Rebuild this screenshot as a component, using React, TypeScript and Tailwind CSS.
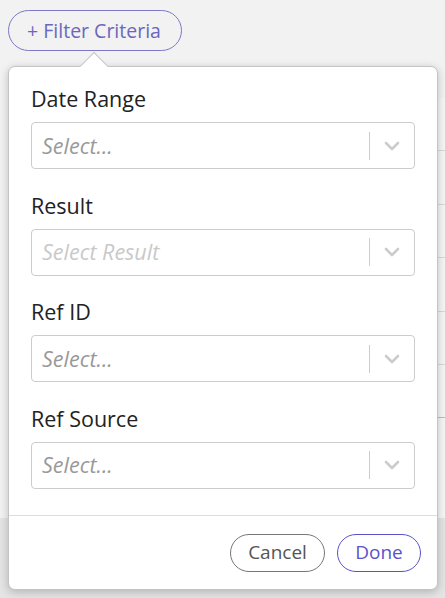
import React from "react"

const fields = [
  { label: "Date Range", placeholder: "Select...", muted: false },
  { label: "Result", placeholder: "Select Result", muted: true },
  { label: "Ref ID", placeholder: "Select...", muted: false },
  { label: "Ref Source", placeholder: "Select...", muted: false },
]

function Chevron() {
  return (
    <svg viewBox="0 0 16 10" className="h-[10px] w-[16px]" fill="none">
      <path d="M2 2 L8 8 L14 2" stroke="#cccccc" strokeWidth="2.6" strokeLinecap="round" strokeLinejoin="round" />
    </svg>
  )
}

function SelectBox({ placeholder, muted }: { placeholder: string; muted: boolean }) {
  return (
    <div className="flex h-[47px] items-center rounded-[4px] border border-[#cccccc] bg-white">
      <span
        className={
          "flex-1 pl-[10px] text-[21.5px] italic leading-[28px] " +
          (muted ? "text-[#c9c9c9]" : "text-[#999999]")
        }
      >
        {placeholder}
      </span>
      <span className="h-[28px] w-px bg-[#cccccc]" />
      <span className="flex w-[44px] items-center justify-center">
        <Chevron />
      </span>
    </div>
  )
}

export default function App() {
  return (
    <div
      className="relative h-[598px] w-[445px] overflow-hidden bg-[#f2f2f2]"
      style={{ fontFamily: '"Open Sans", "Noto Sans", sans-serif' }}
    >
      {/* Toolbar */}
      <div className="pl-[8px] pt-[10px]">
        <button className="h-[41px] w-[174px] rounded-full border border-[#7b78c6] pr-[2px] text-[19.5px] text-[#6a67be]">
          + Filter Criteria
        </button>
      </div>

      {/* Table behind the popover */}
      <div className="ml-[40px] mt-[47px] bg-[#f6f6f6]">
        {[0, 1, 2, 3, 4, 5].map((i) => (
          <div
            key={i}
            className={
              "h-[53.4px] border-b " +
              (i === 5 ? "border-[#bdbdbd]" : "border-[#d9d9d9]")
            }
          />
        ))}
        <div className="h-[100px]" />
      </div>
      <div className="h-[80px] bg-[#e4e4e4]" />

      {/* Popover */}
      <div className="absolute left-[8px] top-[66px] w-[430px] rounded-[7px] border border-[#c4c4c4] bg-white shadow-[0_2px_8px_rgba(0,0,0,0.22)]">
        <div className="absolute left-[75px] top-[-11px] h-[20px] w-[20px] rotate-45 border-l border-t border-[#c4c4c4] bg-white" />
        <div className="relative flex flex-col gap-[22.5px] px-[22px] pt-[18px]">
          {fields.map((f) => (
            <div key={f.label} className="flex flex-col gap-[9px]">
              <div className="text-[21.5px] leading-[28px] text-[#222222]">{f.label}</div>
              <SelectBox placeholder={f.placeholder} muted={f.muted} />
            </div>
          ))}
        </div>
        <div className="mt-[26px] border-t border-[#dddddd]" />
        <div className="flex justify-end gap-[12px] pb-[17px] pr-[16px] pt-[18px]">
          <button className="h-[38px] w-[95px] rounded-full border border-[#777777] text-[19px] text-[#555555]">
            Cancel
          </button>
          <button className="h-[38px] w-[84px] rounded-full border border-[#5b54c8] text-[19px] text-[#5b54c8]">
            Done
          </button>
        </div>
      </div>
    </div>
  )
}
